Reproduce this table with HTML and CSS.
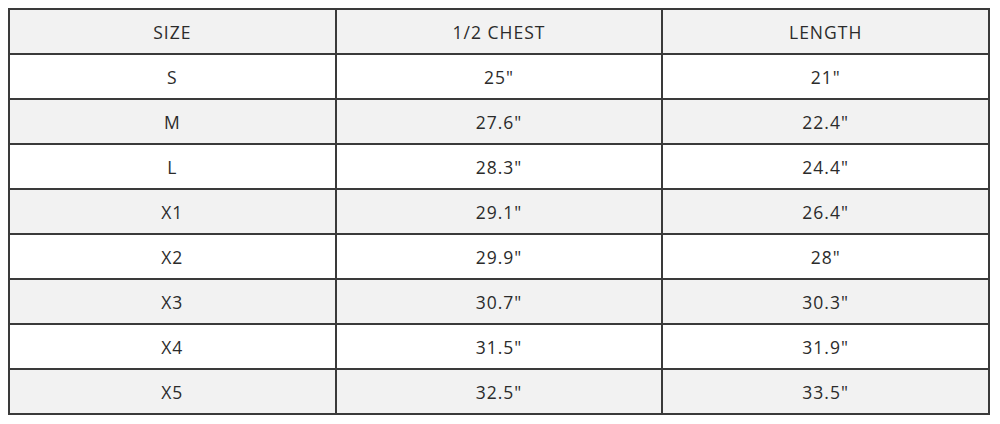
FILE: index.html
```html
<!DOCTYPE html>
<html>
<head>
<meta charset="utf-8">
<link rel="stylesheet" href="styles.css">
</head>
<body>
<table class="size-table">
  <tr class="shade"><td>SIZE</td><td>1/2 CHEST</td><td>LENGTH</td></tr>
  <tr><td>S</td><td>25"</td><td>21"</td></tr>
  <tr class="shade"><td>M</td><td>27.6"</td><td>22.4"</td></tr>
  <tr><td>L</td><td>28.3"</td><td>24.4"</td></tr>
  <tr class="shade"><td>X1</td><td>29.1"</td><td>26.4"</td></tr>
  <tr><td>X2</td><td>29.9"</td><td>28"</td></tr>
  <tr class="shade"><td>X3</td><td>30.7"</td><td>30.3"</td></tr>
  <tr><td>X4</td><td>31.5"</td><td>31.9"</td></tr>
  <tr class="shade"><td>X5</td><td>32.5"</td><td>33.5"</td></tr>
</table>
</body>
</html>
```
FILE: styles.css
```css
html, body {
  margin: 0;
  padding: 0;
  background: #ffffff;
}
body {
  padding: 8px 0 0 8px;
  font-family: "Open Sans", "Liberation Sans", sans-serif;
  color: #2b2b2b;
}
.size-table {
  border-collapse: collapse;
  width: 982px;
  table-layout: fixed;
}
.size-table td {
  border: 2px solid #3a3a3a;
  height: 43px;
  padding: 0;
  text-align: center;
  vertical-align: middle;
  font-size: 17.5px;
  letter-spacing: 1px;
  line-height: 20px;
}
.size-table .shade td {
  background: #f2f2f2;
}
```
